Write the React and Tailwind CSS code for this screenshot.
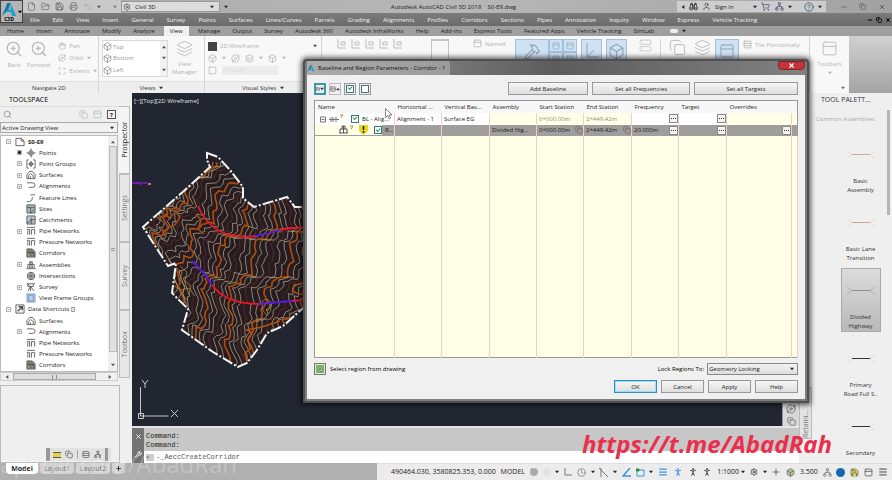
import React from 'react'
import {
  File, FolderOpen, Save, Printer, Undo2, Settings, Binoculars, User, ShoppingCart, CircleHelp,
  Network, ZoomIn, Hand, Orbit, Maximize, Hammer, Box, Server, Copy, PanelTop, Rows3, Layers,
  Search, Wrench, Menu, Plus, Grid3x3, Clock, PersonStanding, MousePointer2, Minus, X, Square,
} from 'lucide-react'

const menus = [
  'File', 'Edit', 'View', 'Insert', 'General', 'Survey', 'Points', 'Surfaces', 'Lines/Curves',
  'Parcels', 'Grading', 'Alignments', 'Profiles', 'Corridors', 'Sections', 'Pipes', 'Annotation',
  'Inquiry', 'Window', 'Express', 'Vehicle Tracking',
]

const ribbonTabs = [
  'Home', 'Insert', 'Annotate', 'Modify', 'Analyze', 'View', 'Manage', 'Output', 'Survey',
  'Autodesk 360', 'Autodesk InfraWorks', 'Help', 'Add-ins', 'Express Tools', 'Featured Apps',
  'Vehicle Tracking', 'SimLab',
]

const tree = [
  { label: 'S0-E9', icon: 'page', root: true, bold: true },
  { label: 'Points', icon: 'point', toggle: 'dot' },
  { label: 'Point Groups', icon: 'group', toggle: 'plus' },
  { label: 'Surfaces', icon: 'surface', toggle: 'plus' },
  { label: 'Alignments', icon: 'align', toggle: 'plus' },
  { label: 'Feature Lines', icon: 'feature' },
  { label: 'Sites', icon: 'site' },
  { label: 'Catchments', icon: 'catch' },
  { label: 'Pipe Networks', icon: 'pipe', toggle: 'plus' },
  { label: 'Pressure Networks', icon: 'pipe' },
  { label: 'Corridors', icon: 'corridor' },
  { label: 'Assemblies', icon: 'assembly', toggle: 'plus' },
  { label: 'Intersections', icon: 'cross' },
  { label: 'Survey', icon: 'survey', toggle: 'plus' },
  { label: 'View Frame Groups', icon: 'frame' },
  { label: 'Data Shortcuts []', icon: 'shortcut', root: true },
  { label: 'Surfaces', icon: 'surface' },
  { label: 'Alignments', icon: 'align', toggle: 'plus' },
  { label: 'Pipe Networks', icon: 'pipe' },
  { label: 'Pressure Networks', icon: 'pipe' },
  { label: 'Corridors', icon: 'corridor' },
]

const paletteItems = [
  { lines: ['Basic', 'Assembly'], color: '#c9a6a0' },
  { lines: ['Basic Lane', 'Transition'], color: '#c9a6a0' },
  { lines: ['Divided', 'Highway'], color: '#8d8d8d', selected: true },
  { lines: ['Primary', 'Road Full S..'], color: '#33343a' },
  { lines: ['Secondary', ''], color: '#33343a' },
]

// Guide curves for the contour lines, west to east
const guides = [
  [[204, 160], [178, 185], [158, 207], [148, 225], [140, 245]],
  [[222, 158], [197, 198], [180, 222], [165, 245], [170, 290]],
  [[243, 188], [222, 222], [200, 250], [190, 285], [182, 330]],
  [[262, 203], [248, 230], [224, 265], [213, 300], [205, 350]],
  [[285, 198], [276, 235], [250, 275], [232, 312], [240, 368]],
  [[308, 205], [305, 240], [285, 280], [262, 312], [254, 360]],
  [[335, 220], [335, 260], [312, 295], [295, 318], [280, 345]],
]

function contour(u) {
  const g = Math.min(Math.floor(u), guides.length - 2)
  const f = u - g
  const points = []
  for (let s = 0; s <= 46; s++) {
    const t = (s / 46) * 4
    const k = Math.min(Math.floor(t), 3)
    const r = t - k
    const at = (c, a) => c[k][a] * (1 - r) + c[k + 1][a] * r
    const x = at(guides[g], 0) * (1 - f) + at(guides[g + 1], 0) * f
    const y = at(guides[g], 1) * (1 - f) + at(guides[g + 1], 1) * f
    const wave = Math.sin(s * 0.45 + u * 1.1) * 4 + Math.sin(s * 1.37 + u * 0.8) * 2 + Math.sin(s * 2.9 + u * 7) * 0.7
    points.push(`${(x + wave).toFixed(1)},${(y + wave * 0.8 + Math.sin(s * 2.1 + u * 3)).toFixed(1)}`)
  }
  return points.join(' ')
}

const contours = Array.from({ length: 34 }, (_, i) => ({
  points: contour(i / 5.6),
  major: i % 6 === 3,
  dark: i % 6 === 0,
}))

const boundary =
  'M207 153 L218 157 L230 170 L243 187 L243 198 L254 207 L267 203 L287 197 L295 207 L320 207 L320 300 L302 309 L292 318 L283 326 L267 333 L257 350 L247 363 L238 367 L213 352 L182 330 L188 309 L172 293 L176 263 L168 266 L143 227 L160 212 L185 190 L210 167 L207 160 Z'

function Terrain() {
  return (
    <svg className="absolute left-0 top-0" width="190" height="290" viewBox="132 93 190 290" fill="none">
      <clipPath id="site"><path d={boundary} /></clipPath>
      <g clipPath="url(#site)">
        <path d={boundary} fill="#261c22" />
        {contours.map((c, i) => (
          <polyline
            key={i}
            points={c.points}
            stroke={c.major ? '#a84c10' : c.dark ? '#6a3024' : '#bfb28e'}
            strokeWidth={c.major ? 1.7 : 0.7}
          />
        ))}
        <g stroke="#b8964a" strokeWidth="0.7">
          <path d="M176 268 l6 4 -2 8 5 6 -3 8 6 7 M180 266 l7 6 -2 9 6 5 -2 9 M173 285 l8 5 8 -2 6 8" />
          <path d="M262 302 q5 -6 9 1 q1 9 -4 12 q-6 -4 -5 -13 M265 304 q4 -3 5 2 q-2 7 -4 3" />
        </g>
        <path d="M247 362 l-2 -9 5 -4 -2 -10 4 -6 -5 -3 15 -3 18 -6 M303 283 q-12 2 -10 8 q5 4 10 3" stroke="#b4520e" strokeWidth="1.6" />
        <path d="M158 219 l8 -5 3 4 7 -6 4 5 -5 8 -8 3 -3 8 M196 214 l5 6 -3 9 6 5" stroke="#a84c10" strokeWidth="1.5" />
        <g strokeWidth="1.8">
          <path d="M198 206 C204 220 214 232 232 235 Q244 238 255 236" stroke="#f01428" />
          <path d="M255 236 Q268 234 280 230" stroke="#5a18e0" />
          <path d="M280 230 Q290 227 305 228" stroke="#f01428" />
          <path d="M192 261 Q203 270 212 285" stroke="#5a18e0" />
          <path d="M212 285 Q226 304 259 304" stroke="#f01428" />
          <path d="M259 304 L292 301" stroke="#5a18e0" />
          <path d="M292 301 L305 300" stroke="#c41a60" />
        </g>
      </g>
      <path d={boundary} stroke="#f4f4f4" strokeWidth="2" strokeDasharray="11 2 2 2" />
      <path d="M132 183 h8 m1 -1 v3 m2 -2 h4" stroke="#7a16b8" strokeWidth="2" />
      <path d="M148 184 h3" stroke="#d06a9a" strokeWidth="2" />
    </svg>
  )
}

const glyphs = {
  page: <path d="M1 1.500h6l3 3v5H1z M7 1.500v3h3" />,
  point: <><circle cx="5.500" cy="5.500" r="2.500" /><path d="M5.500 0.500v10M0.500 5.500h10" /></>,
  group: <><path d="M3 1H1v9h2M8 1h2v9H8M5.500 2v7M2.500 5.500h6" /><circle cx="5.500" cy="5.500" r="1.800" /></>,
  surface: <path d="M1 9.500V5l3-3.500h3L10 5v4.500zM3 9V6l2-2 3 2v3M5 9V7" />,
  align: <path d="M1 2h6q3 0 3 2.500T7 7H3" />,
  feature: <path d="M1 9.500q6 1 6-5M5 2h5" />,
  site: <><path d="M1 1h9v9H1z" fill="#a8bcc0" /><path d="M1 4h9M5 4v6l4-4" /></>,
  catch: <><path d="M1 1h9v9H1z" fill="#b4c8de" /><path d="M1 8h3l2-5M6 10V5h4" /><path d="M7 6v4" stroke="#d88a20" /></>,
  pipe: <path d="M1 1.500h9M1 4h3v5.500M6 9.500V4h3.500v5.500M2 9.500V5" />,
  corridor: <><path d="M1 1h6l3 3v6H1z" fill="#8f9488" /><path d="M3 2l3 7M6 2l3 7M1 5h8" /></>,
  assembly: <path d="M0.500 9.500h10M2 9V5h7v4M4 5V2h3v3M4 9V6M7 9V6M5.500 2v7" />,
  cross: <><circle cx="5.500" cy="5.500" r="4" /><path d="M4.500 1v9M6.500 1v9M1 4.500h9M1 6.500h9" /></>,
  survey: <path d="M2 2h6v3H2zM5 5L2 10M5 5l4 5M5 5v5M1 1l3 3M8 3l2-2" />,
  frame: <><path d="M1 1h9v9H1z" fill="#b9d2ef" stroke="#7b9cc6" /><path d="M3 2v7h5V3z" stroke="#6b87ad" /></>,
  shortcut: <><path d="M1 1h9v9H1z" fill="#f4f4f4" /><path d="M3 8l4-4M4 3h4v4" strokeWidth="1.500" /></>,
}

function Caret({ className = '' }) {
  return <svg className={`h-1 w-1 shrink-0 ${className}`} viewBox="0 0 6 6"><path d="M0 1h6L3 5z" fill="currentColor" /></svg>
}

function Logo({ className }) {
  return (
    <svg className={className} viewBox="0 0 20 18">
      <path d="M1 17L8 1h4l-3 9z" fill="#1a83b0" />
      <path d="M12 1l7 16h-5l-2-5H6l3-3h3z" fill="#24a0cc" />
      <path d="M8 1h4l-7 12z" fill="#1b6c96" />
    </svg>
  )
}

function TitleBar() {
  return (
    <div className="flex h-[13px] items-center bg-gradient-to-r from-[#a9a9a9] via-[#b7b7b7] to-[#a2a2a2] text-[#222]">
      <div className="flex h-full items-center gap-[5px] bg-[#c9c9c9] pl-1 text-[#555]">
        <File size={9} strokeWidth={1.5} />
        <FolderOpen size={9} strokeWidth={1.5} />
        <Save size={9} strokeWidth={2} />
        <Printer size={9} strokeWidth={1.5} />
        <Undo2 size={9} strokeWidth={1.5} className="text-[#999]" />
        <Caret />
      </div>
      <div className="flex h-full w-5 items-center justify-end bg-[#c9c9c9] pr-1 text-[#777]"><Caret /></div>
      <button className="flex h-[11px] w-[99px] items-center gap-1 border border-[#999] bg-[#dcdcdc] px-px">
        <Settings size={8} strokeWidth={1.5} />
        Civil 3D
        <Caret className="ml-auto mr-1" />
      </button>
      <span className="ml-1 mr-auto w-[6px]"><Caret /></span>
      <span className="whitespace-pre">Autodesk AutoCAD Civil 3D 2018    S0-E9.dwg</span>
      <div className="ml-auto flex h-[11px] w-[149px] items-center bg-[#cdcdcd] pl-1">
        <Caret className="rotate-90" />
        <Binoculars size={9} strokeWidth={2} className="ml-1" />
        <User size={9} strokeWidth={1.5} className="mx-1" />
        Sign In
        <Caret className="ml-auto" />
        <ShoppingCart size={9} strokeWidth={1.7} className="ml-1 text-[#37466a]" />
        <Network size={9} strokeWidth={1.7} className="ml-[5px] text-[#37466a]" />
        <Caret className="mx-1" />
        <CircleHelp size={10} strokeWidth={1.8} className="ml-2 text-[#37466a]" />
        <Caret className="mx-1" />
      </div>
      <div className="flex w-[66px] items-center justify-around pl-2 text-[#555]">
        <button aria-label="Minimize"><Minus size={8} strokeWidth={2} /></button>
        <button aria-label="Restore"><Copy size={7} strokeWidth={2} /></button>
        <button aria-label="Close"><X size={8} strokeWidth={2.500} /></button>
      </div>
    </div>
  )
}

function Header() {
  return (
    <header className="shrink-0">
      <div className="flex bg-[#6f6f6f]">
        <button className="flex h-[23px] w-[23px] items-start gap-px border border-[#444] bg-[#b4b4b4] pt-px" aria-label="Application menu">
          <span className="flex flex-col items-center">
            <Logo className="h-[15px] w-4" />
            <span className="text-[5px] font-bold leading-[5px]">C3D</span>
          </span>
          <Caret className="mt-2" />
        </button>
        <div className="min-w-0 flex-1">
          <TitleBar />
          <nav className="flex h-[13px] items-center gap-[13px] whitespace-nowrap bg-gradient-to-b from-[#7b7b7b] to-[#6b6b6b] pl-[7px] text-[#f0f0f0]">
            {menus.map((m) => <button key={m}>{m}</button>)}
            <div className="ml-auto flex gap-[3px] pr-px text-black">
              <Minus size={6} strokeWidth={4} />
              <Copy size={6} strokeWidth={3} />
              <X size={6} strokeWidth={4} />
            </div>
          </nav>
        </div>
      </div>
      <nav className="flex h-[10px] items-center gap-3 whitespace-nowrap bg-[#9f9f9f] pl-[7px] text-[#222]">
        {ribbonTabs.map((t) => (
          <button key={t} className={t === 'View' ? '-mx-[3px] h-full bg-[#f0f0f0] px-[6px]' : ''}>{t}</button>
        ))}
        <span className="ml-1 flex items-center gap-1"><span className="h-1 w-2 rounded-sm bg-[#eee]" /><Caret /></span>
      </nav>
      <Ribbon />
    </header>
  )
}

function Panel({ title, width, arrow, children }) {
  return (
    <section className={`flex shrink-0 flex-col border-r border-[#d4d4d4] ${width}`}>
      <div className="flex h-[45px] pt-1">{children}</div>
      <div className="flex h-3 items-center justify-center gap-1 border-t border-[#dedede] bg-[#eee] text-[#333]">
        {title}
        {arrow && <Caret />}
      </div>
    </section>
  )
}

function Highlight({ children, width }) {
  return (
    <span className={`flex h-6 shrink-0 items-center justify-center border border-[#9fc0dd] bg-[#cfe2f3] text-[#8fa3b5] ${width}`}>{children}</span>
  )
}

function Ribbon() {
  return (
    <div className="flex h-[57px] overflow-hidden bg-[#f8f8f8] text-[#b3b3b3]">
      <Panel title="Navigate 2D" width="w-[99px]">
        <button className="ml-[5px] flex flex-col items-center gap-[3px]"><ZoomIn size={18} strokeWidth={1.5} />Back</button>
        <button className="ml-1 flex flex-col items-center gap-[3px]"><ZoomIn size={18} strokeWidth={1.5} />Forward</button>
        <div className="ml-2 flex flex-col justify-around pb-1">
          <span className="flex items-center gap-[3px]"><Hand size={8} />Pan</span>
          <span className="flex items-center gap-[3px]"><Orbit size={8} />Orbit <Caret /></span>
          <span className="flex items-center gap-[3px]"><Maximize size={8} />Extents <Caret /></span>
        </div>
      </Panel>
      <Panel title="Views" width="w-[106px]" arrow>
        <div className="ml-[3px] flex h-[37px] w-[66px] border border-[#d8d8d8] bg-white text-[#999]">
          <div className="flex flex-1 flex-col justify-around">
            {['Top', 'Bottom', 'Left'].map((v) => (
              <span key={v} className="flex items-center gap-px"><Box size={9} strokeWidth={1.5} className="text-[#666]" />{v}</span>
            ))}
          </div>
          <div className="flex w-[7px] flex-col items-center justify-around bg-[#f2f2f2] text-[#555]">
            <Caret className="rotate-180" /><Caret /><Caret />
          </div>
        </div>
        <button className="ml-1 flex flex-col items-center leading-[8px]"><Layers size={17} strokeWidth={1.2} className="mb-[3px]" />View<br />Manager</button>
      </Panel>
      <Panel title="Visual Styles" width="w-[117px]" arrow>
        <div className="ml-[3px] flex flex-1 flex-col justify-around pb-1">
          <span className="flex items-center gap-[3px]"><span className="h-[9px] w-[9px] bg-[#444]" />2D Wireframe<Caret className="ml-auto mr-1 text-[#444]" /></span>
          <span className="flex items-center gap-[5px]"><Box size={9} /><Caret /><Orbit size={9} /><Layers size={9} /><Caret /><Box size={9} /><Caret /></span>
          <span className="flex items-center gap-[5px]"><Square size={9} /><span className="h-[9px] w-[56px] bg-[#ececec] pl-[3px] text-[#ddd]">Opacity</span></span>
        </div>
      </Panel>
      <div className="flex min-w-0 flex-1 items-start gap-1 pt-[3px] pl-[15px]">
        {[0, 1, 2, 3, 4].map((i) => (
          <svg key={i} className="h-[11px] w-[10px] shrink-0" viewBox="0 0 10 11" fill="none" stroke="#bcbcbc"><path d="M1 0v9h8M4 3h4v3H4z" /></svg>
        ))}
        <span className="ml-6 h-6 w-[18px] shrink-0 border border-[#c4c4c4] border-t-2" />
        <span className="ml-5 flex w-[38px] shrink-0 items-center gap-[3px]"><PanelTop size={9} />Named</span>
        <Highlight width="w-[34px]"><Hammer size={17} strokeWidth={1.5} /></Highlight>
        <div className="-ml-1 grid shrink-0 grid-cols-2">
          {[0, 1, 2, 3].map((i) => (
            <span key={i} className="flex h-[13px] w-[14px] items-center justify-center border border-[#9fc0dd] bg-[#cfe2f3]"><PanelTop size={8} className="text-[#8fa3b5]" /></span>
          ))}
        </div>
        <Highlight width="w-[21px]"><svg width="14" height="16" viewBox="0 0 14 16" fill="none" stroke="currentColor"><path d="M2 0v14h12M2 14l7-7" /></svg></Highlight>
        <Highlight width="w-[21px]"><Box size={17} strokeWidth={1.5} /></Highlight>
        <Server size={13} strokeWidth={1.2} className="ml-2 shrink-0" />
        <span className="ml-1 h-10 w-px shrink-0 bg-[#d4d4d4]" />
        <Copy size={17} strokeWidth={1.2} className="ml-1 shrink-0" />
        <Layers size={17} strokeWidth={1.2} className="ml-1 shrink-0" />
        <Highlight width="w-[24px]"><PanelTop size={16} strokeWidth={1.5} /></Highlight>
        <span className="flex shrink-0 items-center gap-[3px] pt-px"><Rows3 size={9} />Tile Horizontally</span>
      </div>
      <div className="flex w-[40px] flex-col items-center gap-[3px] border-l border-[#d4d4d4] pt-1">
        <PanelTop size={17} strokeWidth={1.2} />Toolbars<Caret />
        <Caret className="mr-1 mt-2 self-end text-[#666]" />
      </div>
      <div className="w-[43px] bg-gradient-to-b from-[#d0d0d0] to-[#a5a5a5]" />
    </div>
  )
}

function TreeRow({ item }) {
  return (
    <li className={`flex flex-1 items-center text-[#222] ${item.root ? 'pl-[5px]' : 'pl-4'}`}>
      <span className="flex h-[5px] w-[5px] shrink-0 items-center justify-center">
        {(item.toggle || item.root) && (
          <svg viewBox="0 0 5 5" className="h-[5px] w-[5px]" stroke="#888" strokeWidth="0.700" fill="none">
            <path d={item.root ? 'M0.500 0.500h4v4h-4zM1.500 2.500h2' : 'M0.500 0.500h4v4h-4zM1.500 2.500h2M2.500 1.500v2'} />
            {item.toggle === 'dot' && <path d="M1.500 1.500h2v2h-2z" fill="#111" stroke="#111" />}
          </svg>
        )}
      </span>
      <svg viewBox="0 0 11 11" className="ml-1 mr-[3px] h-[10px] w-[10px] shrink-0" fill="none" stroke="#4c4c4c" strokeWidth="0.900">{glyphs[item.icon]}</svg>
      <span className={item.bold ? 'font-bold' : ''}>{item.label}</span>
    </li>
  )
}

function Toolspace() {
  return (
    <aside className="flex w-[132px] shrink-0 flex-col bg-[#efefef]">
      <h2 className="h-[13px] pl-[9px] text-[7px] leading-[13px]">TOOLSPACE</h2>
      <div className="flex">
        <div className="flex w-[119px] flex-col">
          <div className="flex h-4 items-center gap-[5px] border-t border-[#ddd] px-[3px] text-[#777]">
            <Search size={9} strokeWidth={1.700} />
            <Copy size={9} className="ml-auto text-[#bbb]" />
            <PanelTop size={9} className="text-[#bbb]" />
            <button className="h-[9px] w-[9px] border border-[#555] text-center font-bold leading-[8px] text-[#222]">?</button>
          </div>
          <div className="flex h-[11px] w-[118px] items-center border border-[#aaa] bg-[#f2f2f2] pl-px pr-[3px] text-[#222]">
            <select aria-label="View" className="flex-1 appearance-none outline-none">
              <option>Active Drawing View</option>
            </select>
            <Caret />
          </div>
          <div className="mt-[2px] flex w-[118px] border border-[#bbb] bg-white">
            <ul className="flex h-[235px] flex-1 flex-col">
              {tree.map((item, i) => <TreeRow key={i} item={item} />)}
            </ul>
            <div className="flex w-[9px] flex-col items-center bg-[#f0f0f0] py-1 text-[#555]">
              <Caret className="rotate-180" />
              <div className="my-[2px] flex h-[206px] w-2 items-center justify-center border border-[#bbb] bg-[#e0e0e0]" >
                <span className="h-[3px] w-1 border-y border-[#999]" />
              </div>
              <Caret className="mt-auto" />
            </div>
          </div>
          <div className="flex h-[9px] w-[118px] items-center gap-1 border border-[#ccc] px-1 text-[#555]">
            <Caret className="rotate-90" />
            <div className="flex h-[7px] w-[83px] items-center justify-center border border-[#aaa] bg-[#ddd]"><span className="h-1 w-[5px] border-x border-[#888]" /></div>
            <Caret className="ml-2 -rotate-90" />
          </div>
        </div>
        <div className="flex w-[11px] flex-col text-[7px] text-[#777]">
          {['Prospector', 'Settings', 'Survey', 'Toolbox'].map((t, i) => (
            <button key={t} className={`flex h-[68px] items-center justify-center border border-[#bcbcbc] ${i === 0 ? 'border-l-0 bg-[#f4f4f4] text-[#222]' : 'bg-[#e8e8e8]'}`}>
              <span className="rotate-180 whitespace-nowrap leading-[9px] [writing-mode:vertical-rl]">{t}</span>
            </button>
          ))}
        </div>
      </div>
      <div className="mt-1 flex w-[120px] flex-1 items-end justify-end border border-[#bbb] pb-px pr-2">
        <div className="flex h-[13px] w-[65px] items-center gap-1 border-l-4 border-[#999] bg-[#e2e2e2] px-[3px] text-[#555]">
          <span className="h-[6px] w-[9px] border-y border-[#555] bg-[#e8d040]" />
          <Copy size={9} />
          <span className="h-[9px] w-px bg-[#aaa]" />
          <Rows3 size={9} />
          <Network size={9} />
          <span className="ml-auto h-full w-[3px] bg-[#999]" />
        </div>
      </div>
    </aside>
  )
}

function Drawing() {
  return (
    <main className="flex min-w-0 flex-1 flex-col">
      <div className="flex min-h-0 flex-1">
        <div className="relative min-w-0 flex-1 overflow-hidden bg-[#212630]">
          <Terrain />
          <p className="relative pl-[2px] pt-1 text-[6px] leading-[8px] text-[#e4e4e4]">[−][Top][2D Wireframe]</p>
          <svg className="absolute bottom-[5px] left-[6px]" width="42" height="42" viewBox="0 0 42 42" fill="none" stroke="#c8c8c8">
            <path d="M2.500 8v29h28M0.500 34.500h5v5h-5z" />
            <path d="M4 1l3 4v4M10 1L7 5M33 31l7 7M40 31l-7 7" />
          </svg>
        </div>
        <div className="flex w-[17px] flex-col items-center justify-end border-l border-[#999] bg-[#d8d8d8] text-[#666]">
          <Orbit size={10} /><Copy size={9} className="mt-[3px]" />
        </div>
      </div>
      <div className="flex h-[37px] border-t-2 border-[#e5e5e5]">
        <div className="flex w-3 flex-col items-center justify-around bg-[#737373] text-white">
          <X size={7} strokeWidth={3} />
          <Wrench size={7} strokeWidth={3} />
        </div>
        <div className="flex flex-1 flex-col bg-[#c8c7c7] font-['Liberation_Mono',monospace] text-[7px] text-[#222]">
          <p className="pl-[2px] pt-1 leading-[9px]">Command:<br />Command:</p>
          <label className="mt-auto flex h-3 items-center bg-white pl-[2px]">
            <span className="mr-[2px] h-[7px] w-2 bg-[#ccc] leading-[7px] text-[#888]">▸</span>
            <input aria-label="Command line" className="flex-1 text-[#555] outline-none" defaultValue="-_AeccCreateCorridor" />
          </label>
        </div>
      </div>
    </main>
  )
}

function ToolPalette() {
  return (
    <aside className="flex w-[93px] shrink-0 overflow-hidden bg-[#efefef] text-[#333]">
      <div className="flex w-[13px] flex-col justify-end pb-6">
        <span className="h-[52px] rotate-180 border border-[#bbb] bg-[#e2e2e2] pb-1 text-[7px] leading-[11px] text-[#777] [writing-mode:vertical-rl]">Retaini...</span>
      </div>
      <div className="flex min-w-0 flex-1 flex-col">
        <h2 className="pl-[9px] text-[7px] leading-[13px]">TOOL PALETT...</h2>
        <div className="flex">
          <div className="flex flex-1 flex-col">
            <p className="pl-1 pt-[9px] leading-[9px] text-[#a9a9a9]">Common Assemblies</p>
            <div className="mt-2 flex h-[330px] flex-col items-center gap-1 overflow-hidden pl-[22px]">
              {paletteItems.map((p) => (
                <button
                  key={p.lines[0]}
                  className={`flex h-16 w-10 shrink-0 flex-col items-center justify-end border leading-[9px] ${p.selected ? 'border-[#aaa] bg-gradient-to-b from-[#dcdcdc] to-[#b9b9b9]' : 'border-transparent'}`}
                >
                  <svg className="mb-[18px]" width="30" height="9" viewBox="0 0 30 9" fill="none">
                    <path d="M1 1l5 3.500-5 4M29 1l-5 3.500 5 4" stroke={p.selected ? '#b5b0a8' : '#ecdcc4'} />
                    <path d="M6 4.500h18" stroke={p.color} />
                  </svg>
                  <span className="whitespace-nowrap">{p.lines[0]}</span>
                  <span className="h-[9px] whitespace-nowrap">{p.lines[1]}</span>
                </button>
              ))}
            </div>
          </div>
          <span className="mr-[2px] mt-1 h-[105px] w-[3px] bg-[#b5b5b5]" />
        </div>
      </div>
    </aside>
  )
}

function StatusBar() {
  return (
    <footer className="flex h-[17px] shrink-0 items-stretch bg-[#b0b0b0] text-[#222]">
      <div className="flex flex-1 items-start gap-[2px] pl-[6px]">
        <button className="h-[11px] w-8 rounded-b bg-white text-[7px] font-bold">Model</button>
        <button className="h-[11px] w-[34px] rounded-b bg-[#d2d2d2] text-[7px] text-[#777]">Layout1</button>
        <button className="h-[11px] w-[34px] rounded-b bg-[#d2d2d2] text-[7px] text-[#777]">Layout2</button>
        <button className="flex h-[11px] w-3 items-center justify-center rounded-b bg-[#d2d2d2]" aria-label="New layout"><Plus size={7} strokeWidth={3} /></button>
      </div>
      <div className="flex w-[515px] items-center justify-between border-t border-[#ddd] bg-[#ececec] pl-[14px] pr-1 text-[7px]">
        <span>490464.030, 3580825.353, 0.000</span>
        <span>MODEL</span>
        <Grid3x3 size={8} className="text-[#777]" />
        <Grid3x3 size={8} className="text-[#ddd]" />
        <Caret />
        <svg width="8" height="8" viewBox="0 0 8 8" fill="none" stroke="#777"><path d="M1 0v7h7" /></svg>
        <Clock size={9} className="text-[#777]" />
        <Caret />
        <svg width="9" height="9" viewBox="0 0 9 9" fill="none" stroke="#777"><path d="M0 0l9 9M2 0v9" /></svg>
        <Caret />
        <svg width="9" height="9" viewBox="0 0 9 9" fill="none" stroke="#3b95e0" strokeWidth="1.500"><path d="M8 0L1 8h8" /></svg>
        <svg width="9" height="9" viewBox="0 0 9 9" fill="none" stroke="#3b95e0"><path d="M1 2h7v6H1z" /><path d="M0 1h3v2H0z" fill="#2f8f3a" stroke="#2f8f3a" /></svg>
        <Caret />
        <Menu size={10} strokeWidth={3} className="text-[#3b95e0]" />
        <PersonStanding size={10} strokeWidth={2.500} className="text-[#3b95e0]" />
        <PersonStanding size={10} strokeWidth={2} />
        <PersonStanding size={10} strokeWidth={2} />
        <span className="flex items-center gap-[2px]">1:1000 <Caret /></span>
        <Settings size={8} strokeWidth={3} className="text-[#555]" />
        <Caret />
        <Plus size={10} strokeWidth={2} className="text-[#555]" />
        <Box size={9} className="fill-[#b5c79a] text-[#666]" />
        <span>3.500</span>
        <Network size={9} className="text-[#777]" />
        <span className="h-[9px] w-[9px] rounded-full bg-[#1668b4]" />
        <Save size={9} className="fill-[#e8de5a] text-[#555]" />
        <PanelTop size={9} className="text-[#555]" />
        <Menu size={10} strokeWidth={2} />
      </div>
    </footer>
  )
}

function DialogButton({ children, className = '' }) {
  return (
    <button className={`h-[13px] border bg-gradient-to-b from-[#f6f6f6] to-[#dedede] leading-[10px] text-[#222] ${className || 'w-[43px] border-[#999]'}`}>{children}</button>
  )
}

function More() {
  return (
    <button aria-label="More" className="flex h-[9px] w-[9px] shrink-0 items-center justify-center border border-[#888] bg-[#f3f3f3]">
      <svg width="5" height="1" viewBox="0 0 5 1"><path d="M0 0h1v1H0zM2 0h1v1H2zM4 0h1v1H4z" fill="#333" /></svg>
    </button>
  )
}

function Check({ label }) {
  return (
    <input
      type="checkbox"
      defaultChecked
      aria-label={label}
      className="grid h-2 w-2 shrink-0 appearance-none place-items-center border border-[#3a7585] bg-white after:h-[3px] after:w-1 after:-translate-y-px after:-rotate-45 after:border-b after:border-l after:border-[#1f9a3c] after:content-['']"
    />
  )
}

const columns = [
  ['Name', 'w-[80px]'], ['Horizontal ...', 'w-[47px]'], ['Vertical Bas...', 'w-[48px]'],
  ['Assembly', 'w-[47px]'], ['Start Station', 'w-[47px]'], ['End Station', 'w-[48px]'],
  ['Frequency', 'w-[47px]'], ['Target', 'w-[48px]'], ['Overrides', ''], ['', 'w-[6px]'],
]

const cell = 'overflow-hidden whitespace-nowrap border-r border-[#f3cdc6] p-0 pl-[2px]'

function RegionTable() {
  return (
    <table className="w-full table-fixed border-collapse border border-[#999] bg-[#ffffe8] text-[#222]">
      <thead>
        <tr className="h-3 bg-[#f7f7f7] text-left">
          {columns.map(([name, w], i) => (
            <th key={i} className={`whitespace-nowrap p-0 pl-[3px] font-normal ${w}`}>{name}</th>
          ))}
        </tr>
      </thead>
      <tbody>
        <tr className="h-3">
          <td className={`${cell} bg-white`}>
            <div className="flex items-center gap-[3px] pl-[3px]">
              <svg width="28" height="10" viewBox="0 0 28 10" fill="none" stroke="#777">
                <path d="M0.500 3h5v5h-5zM1.500 5.500h3M9 5.500h10" /><path d="M11 3v5M13 3v5M16 3v5" /><path d="M20 1h3l-2 3" stroke="#9a9a20" />
              </svg>
              <Check label="BL - Alignment" />BL - Alig...
            </div>
          </td>
          <td className={`${cell} bg-white`}>Alignment - 1</td>
          <td className={`${cell} bg-white`}>Surface EG</td>
          <td className={cell} />
          <td className={`${cell} text-[#8c8c80]`}>0+000.00m</td>
          <td className={`${cell} text-[#8c8c80]`}>2+449.42m</td>
          <td className={`${cell} bg-white`}><div className="flex justify-end"><More /></div></td>
          <td className={`${cell} bg-white`}><div className="flex justify-end"><More /></div></td>
          <td className={cell} />
          <td className="p-0" />
        </tr>
        <tr className="h-[11px] bg-[#a09d9d]">
          <td className={cell}>
            <div className="-ml-[2px] flex items-center gap-[3px] bg-[#a09d9d]">
              <span className="flex items-center gap-[6px] bg-[#ffffe8] pl-6">
                <svg width="14" height="10" viewBox="0 0 14 10" fill="none" stroke="#555">
                  <path d="M0 8h9M1 8V4h7v4M3 4V1h3v3M4.500 1v7" /><path d="M11 1h3l-2 3" stroke="#9a9a20" />
                </svg>
                <svg width="9" height="10" viewBox="0 0 9 10"><path d="M0 0h9v6L4.500 10 0 6z" fill="#e6d820" /><path d="M4.500 1v4M4.500 6v2" stroke="#222" strokeWidth="1.500" /></svg>
                <Check label="Region" />
              </span>
              R...
            </div>
          </td>
          <td className={cell} />
          <td className={cell} />
          <td className={cell}>Divided Hig...</td>
          <td className={cell}><div className="flex items-center justify-between">0+000.00m<Copy size={8} className="shrink-0 text-[#666]" /></div></td>
          <td className={cell}><div className="flex items-center justify-between">2+449.42m<Copy size={8} className="shrink-0 text-[#666]" /></div></td>
          <td className={cell}><div className="flex items-center justify-between">20.000m<More /></div></td>
          <td className={cell}><div className="flex justify-end"><More /></div></td>
          <td className={cell}><div className="flex justify-end"><More /></div></td>
          <td className="p-0" />
        </tr>
        <tr className="h-[222px]">
          {columns.map((_, i) => <td key={i} className={cell} />)}
        </tr>
      </tbody>
    </table>
  )
}

function Dialog() {
  return (
    <div role="dialog" aria-label="Baseline and Region Parameters" className="absolute left-[303px] right-[83px] top-[59px] rounded-t border-2 border-[#4f4f4f] bg-[#7d7d7d] px-[2px] pb-[2px] shadow-[0_0_5px_2px_rgba(0,0,0,0.6)]">
      <div className="flex h-[14px] items-start bg-gradient-to-r from-[#9c9c9c] via-[#5c5c5c] to-[#818181] text-[#151515]">
        <div className="flex h-full items-center gap-[3px] bg-[#b4b4b4]/60 pr-1">
          <Logo className="h-[7px] w-2" />
          Baseline and Region Parameters - Corridor - 1
        </div>
        <button aria-label="Close" className="ml-auto flex h-[9px] w-[27px] items-center justify-center rounded-b-sm border border-[#7c2a2a] bg-[#c8303a] text-white">
          <X size={7} strokeWidth={4} />
        </button>
      </div>
      <div className="bg-[#f0f0f0] px-[7px] pb-[6px] pt-[7px]">
        <div className="flex h-[13px] items-center gap-[3px] text-[#444]">
          <button aria-label="Expand" className="flex h-3 w-3 items-center justify-center border-2 border-[#3d96a6] bg-[#e3eff2]"><Rows3 size={6} /><Caret /></button>
          <button aria-label="Collapse" className="flex h-3 w-3 items-center justify-center border border-[#bbb]"><Rows3 size={6} /><Caret className="rotate-180" /></button>
          <span className="flex h-3 w-3 items-center justify-center border border-[#999]"><Check label="Select all" /></span>
          <span className="flex h-3 w-3 items-center justify-center border border-[#999]">
            <input type="checkbox" aria-label="Clear all" className="h-2 w-2 appearance-none border border-[#4d6a8c] bg-white" />
          </span>
          <DialogButton className="ml-auto w-[80px] border-[#999]">Add Baseline</DialogButton>
          <DialogButton className="ml-px w-[98px] border-[#999]">Set all Frequencies</DialogButton>
          <DialogButton className="ml-px w-[104px] border-[#999]">Set all Targets</DialogButton>
        </div>
        <div className="mt-[5px]"><RegionTable /></div>
        <div className="mt-[5px] flex items-center">
          <button aria-label="Pick region" className="flex h-3 w-3 items-center justify-center border border-[#777] bg-[#dfe8da]">
            <span className="flex h-2 w-2 items-end justify-end bg-[#7fb56b]"><MousePointer2 size={5} className="fill-white text-[#333]" /></span>
          </button>
          <span className="ml-1">Select region from drawing</span>
          <label htmlFor="lock" className="ml-auto">Lock Regions To:</label>
          <div className="ml-[3px] flex h-3 w-[91px] items-center border border-[#888] bg-gradient-to-b from-[#f2f2f2] to-[#dedede] pl-px pr-[3px] text-[#222]">
            <select id="lock" className="flex-1 appearance-none outline-none">
              <option>Geometry Locking</option>
            </select>
            <Caret />
          </div>
        </div>
        <div className="mt-[5px] flex justify-end gap-1">
          <DialogButton className="w-[43px] border-[#2f8fc0] shadow-[inset_0_0_0_1px_#9fdcf2]">OK</DialogButton>
          <DialogButton>Cancel</DialogButton>
          <DialogButton>Apply</DialogButton>
          <DialogButton>Help</DialogButton>
        </div>
      </div>
      {/* mouse pointer */}
      <svg className="absolute left-[80px] top-[47px]" width="8" height="12" viewBox="0 0 8 12"><path d="M0.500 0.500v9l2-2 1.500 3.500 1.500-1L4 7h3z" fill="#fff" stroke="#555" strokeWidth="0.700" /></svg>
    </div>
  )
}

export default function App() {
  return (
    <div className="relative flex h-screen flex-col overflow-hidden bg-[#efefef] font-['Open_Sans',sans-serif] text-[6px] leading-[8px]">
      <Header />
      <div className="flex min-h-0 flex-1">
        <Toolspace />
        <Drawing />
        <ToolPalette />
      </div>
      <StatusBar />
      <Dialog />
      <span className="pointer-events-none absolute bottom-0 left-0 text-[24px] leading-[32px] text-white/25">aparat.com/AbadRah</span>
      <a href="https://t.me/AbadRah" className="absolute bottom-[20px] right-[60px] text-[24px] font-bold italic leading-[32px] text-[#e8304e]">https://t.me/AbadRah</a>
    </div>
  )
}
